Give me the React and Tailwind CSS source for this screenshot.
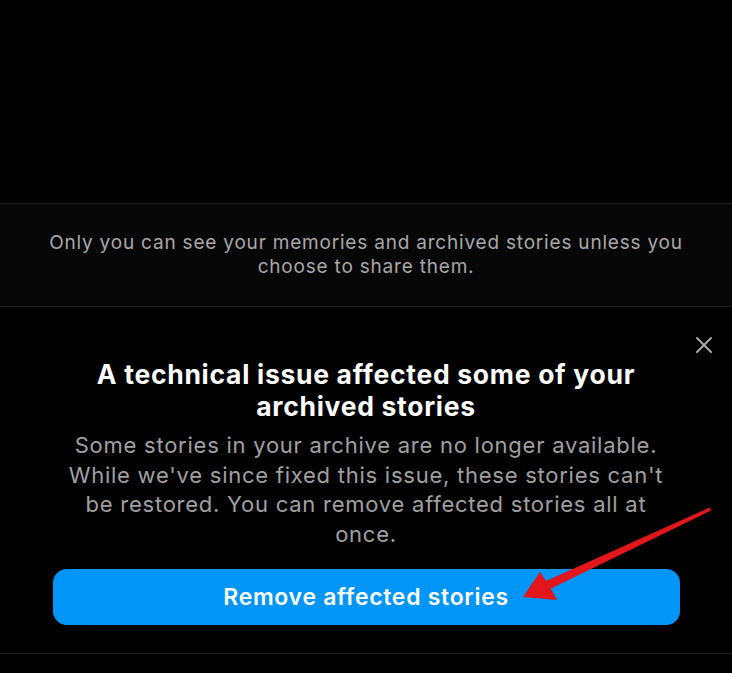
import React from 'react';

// Archive notice: privacy note + technical-issue banner with action button

function CloseIcon() {
    return (
        <svg width="18" height="18" viewBox="0 0 18 18" fill="none">
            <path d="M2 2L16 16M16 2L2 16" stroke="#a8a8a8" strokeWidth="2" strokeLinecap="round" />
        </svg>
    );
}

// Red annotation arrow drawn over the screenshot
function PointerArrow() {
    return (
        <svg className="absolute left-0 top-0 pointer-events-none" width="732" height="673" viewBox="0 0 732 673">
            <path d="M709.6 507.6 L711 510.4 L550 589 L546 581 Z" fill="#e3161b" />
            <path d="M523 597 L540 572 L549 585 L557 600 Z" fill="#e3161b" />
        </svg>
    );
}

export default function App() {
    return (
        <div className="relative w-[732px] h-[673px] overflow-hidden bg-black" style={{ fontFamily: 'Inter, "Liberation Sans", sans-serif' }}>
            {/* --- Empty top area --- */}
            <div className="h-[203px]" />

            {/* --- Privacy note --- */}
            <div className="border-y border-[#1e1e1e] bg-[#070707] h-[104px] flex items-center justify-center">
                <p className="text-center text-[19px] leading-[24px] tracking-[0.8px] text-[#a8a8a8]">
                    Only you can see your memories and archived stories unless you
                    <br />
                    choose to share them.
                </p>
            </div>

            {/* --- Technical issue card --- */}
            <div className="relative flex flex-col items-center pt-[51px] pb-[28px] border-b border-[#1e1e1e]">
                <button className="absolute right-[19px] top-[29px]">
                    <CloseIcon />
                </button>
                <h2 className="text-center text-[26.5px] leading-[32px] font-bold tracking-[0.7px] text-white">
                    A technical issue affected some of your
                    <br />
                    archived stories
                </h2>
                <p className="mt-[9px] text-center text-[22px] leading-[29.5px] tracking-[0.75px] text-[#a0a0a0]">
                    Some stories in your archive are no longer available.
                    <br />
                    While we've since fixed this issue, these stories can't
                    <br />
                    be restored. You can remove affected stories all at
                    <br />
                    once.
                </p>
                <button className="mt-[20px] w-[627px] h-[56px] rounded-[14px] bg-[#0095f6] text-white text-[23px] font-semibold tracking-[0.7px]">
                    Remove affected stories
                </button>
            </div>

            <PointerArrow />
        </div>
    );
}
